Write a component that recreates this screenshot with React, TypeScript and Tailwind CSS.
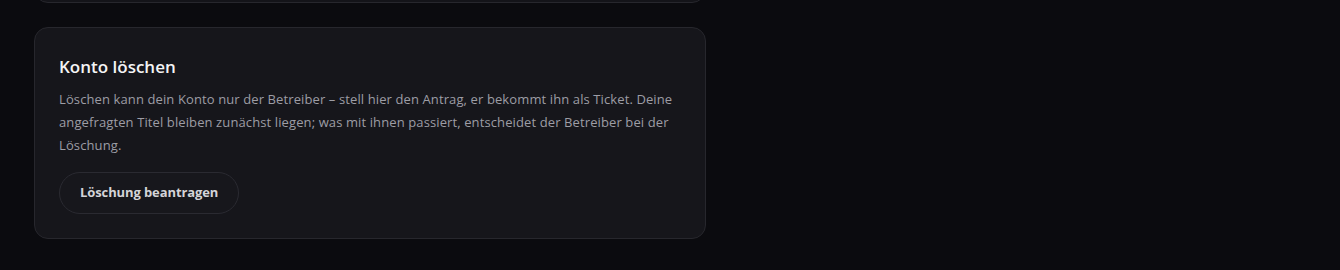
export default function App() {
  return (
    <div
      className="min-h-[270px] w-full bg-[#0b0b0f] overflow-hidden"
      style={{ fontFamily: '"Open Sans", "Noto Sans", sans-serif' }}
    >
      <div className="flex w-[672px] flex-col gap-6 ml-[34px]">
        <div className="-mt-[37px] h-[40px] rounded-[14px] border border-[#27272d] bg-[#141419]" />
        <div className="rounded-[14px] border border-[#27272d] bg-[#16161b] px-6 pt-6 pb-6">
          <h2 className="text-[17px] font-semibold leading-[30px] text-[#f4f4f5]">Konto löschen</h2>
          <p className="mt-[6px] text-[13px] leading-[23px] tracking-[0.11px] text-[#9d9da5]">
            Löschen kann dein Konto nur der Betreiber – stell hier den Antrag, er bekommt ihn als Ticket. Deine
            angefragten Titel bleiben zunächst liegen; was mit ihnen passiert, entscheidet der Betreiber bei der
            Löschung.
          </p>
          <button className="mt-[15px] h-[42px] rounded-full border border-[#2a2a31] bg-[#17171c] px-5 text-[13px] font-bold tracking-[-0.1px] text-[#d4d4d8]">
            Löschung beantragen
          </button>
        </div>
      </div>
    </div>
  );
}
